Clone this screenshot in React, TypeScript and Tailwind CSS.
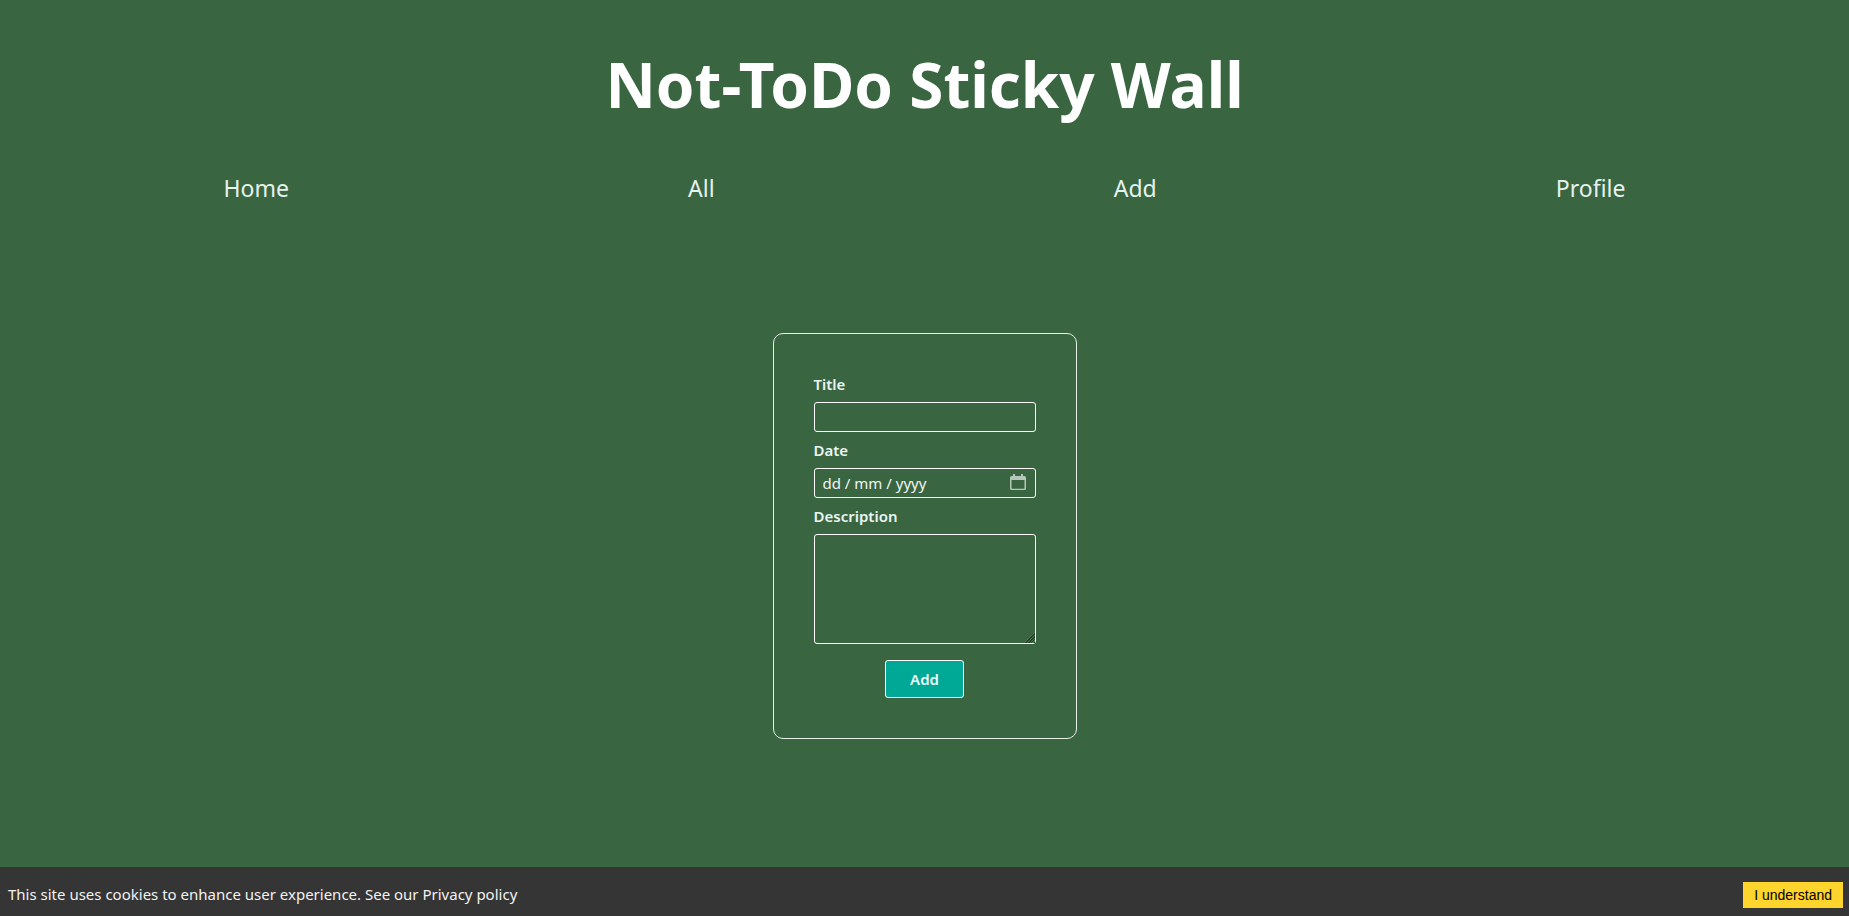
import React from "react";

const navItems = ["Home", "All", "Add", "Profile"];

const fieldClass =
  "block w-full rounded-[3px] border border-white bg-transparent px-2 text-[15px] text-[#f0f5f5] placeholder:text-[#f0f5f5] placeholder:opacity-100 outline-none focus:ring-1 focus:ring-white";
const labelClass = "mb-2 block text-[15px] leading-5 font-semibold text-[#eaf5f2]";

function CalendarIcon() {
  return (
    <svg viewBox="0 0 16 16" className="size-4" aria-hidden="true">
      <path
        d="M3 0h2v2h6V0h2v2h1.500A1.500 1.500 0 0 1 16 3.500v11a1.500 1.500 0 0 1-1.500 1.500h-13A1.500 1.500 0 0 1 0 14.500v-11A1.500 1.500 0 0 1 1.500 2H3zM1.500 6v7.900a.8.8 0 0 0 .8.8h11.400a.8.8 0 0 0 .8-.8V6z"
        fill="#b6c6ba"
        fillRule="evenodd"
      />
    </svg>
  );
}

export default function App() {
  return (
    <div className="flex min-h-screen flex-col bg-[#396641] font-['Noto_Sans',sans-serif] text-[#f0f5f5]">
      <header>
        <h1 className="px-6 pt-10 text-center text-[62px] leading-[88px] font-bold text-white">
          Not-ToDo Sticky Wall
        </h1>
        <nav className="mt-10 flex justify-around px-6 pt-1 text-[23px] leading-8">
          {navItems.map((item) => (
            <a key={item} href={`#${item.toLowerCase()}`} className="text-[#e6f2ee]">
              {item}
            </a>
          ))}
        </nav>
      </header>

      <main className="flex flex-1 items-start justify-center pt-[129px] pb-16">
        <form
          className="w-76 rounded-[10px] border border-[#e6efe8] p-10"
          onSubmit={(e) => e.preventDefault()}
        >
          <div className="mb-2">
            <label htmlFor="title" className={labelClass}>Title</label>
            <input id="title" type="text" className={`${fieldClass} h-[30px]`} />
          </div>
          <div className="mb-2">
            <label htmlFor="date" className={labelClass}>Date</label>
            <div className="relative">
              <input id="date" type="text" placeholder="dd / mm / yyyy" className={`${fieldClass} h-[30px]`} />
              <button type="button" aria-label="Choose date" className="absolute inset-y-0 right-0 flex items-center px-2.5 pb-0.5">
                <CalendarIcon />
              </button>
            </div>
          </div>
          <div>
            <label htmlFor="description" className={labelClass}>Description</label>
            <textarea
              id="description"
              className={`${fieldClass} h-[110px] resize [&::-webkit-resizer]:bg-[linear-gradient(135deg,#396641_0_60%,transparent_60%),repeating-linear-gradient(135deg,#264228_0_1px,#4a7452_1px_2px)]`}
            />
          </div>
          <button
            type="submit"
            className="mx-auto mt-4 block h-[38px] w-[79px] rounded-[3px] border border-white bg-[#00a896] text-[15px] font-semibold text-[#eefaf7]"
          >
            Add
          </button>
        </form>
      </main>

      <footer className="flex items-start justify-between bg-[#353535] pt-[15px] pr-1.5 pb-2 pl-2">
        <p className="text-[15px] leading-6 text-[#f2f2f2]">
          This site uses cookies to enhance user experience. See our <a href="#privacy">Privacy policy</a>
        </p>
        <button type="button" className="h-[26px] bg-[#ffd42d] px-[11px] font-['Liberation_Sans',sans-serif] text-[14px] leading-4 text-black">
          I understand
        </button>
      </footer>
    </div>
  );
}
